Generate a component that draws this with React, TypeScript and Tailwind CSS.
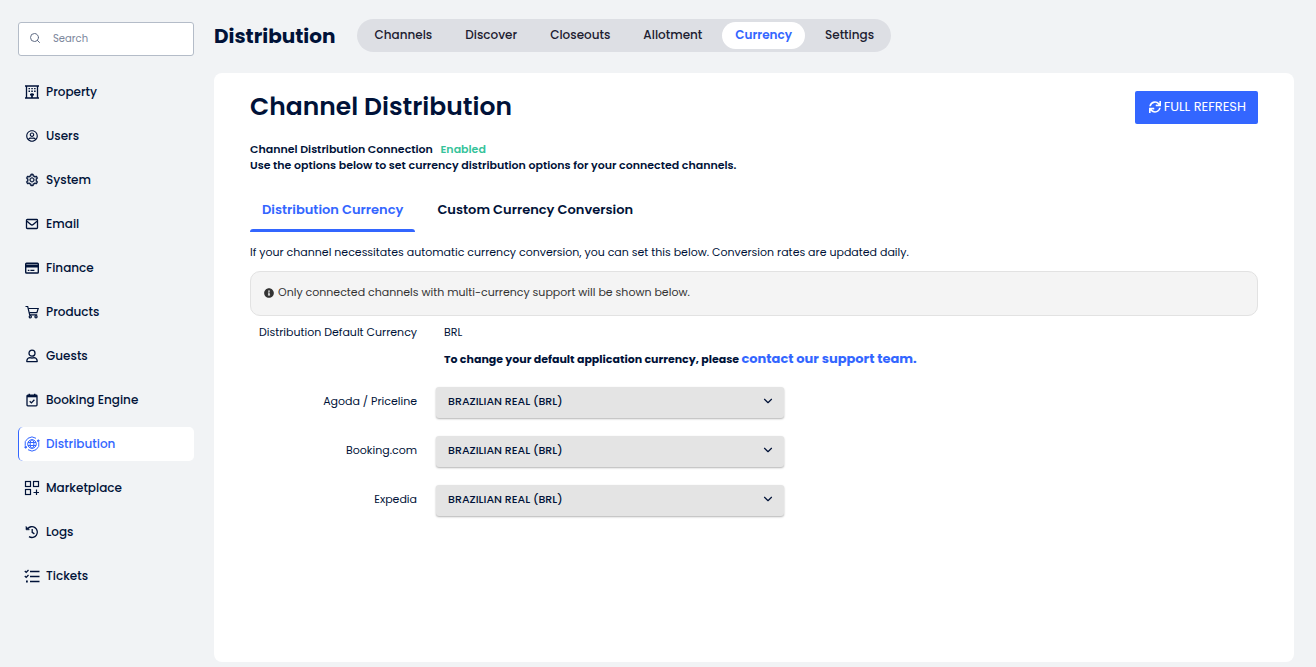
import React, { useState } from "react";
import { AiOutlineSetting } from "react-icons/ai";
import { FaInfoCircle, FaRegUserCircle, FaSync } from "react-icons/fa";
import { FiChevronDown, FiSearch } from "react-icons/fi";

type IconProps = { className?: string };

function BuildingIcon({ className }: IconProps) {
  return (
    <svg viewBox="0 0 14 14" fill="none" stroke="currentColor" className={className} aria-hidden="true">
      <path d="M0 1h14M0 13h14" strokeWidth="1.3" />
      <path d="M1.5 1v12M12.5 1v12" strokeWidth="1.3" />
      <path d="M3.5 3.6h7.2M3.5 6.3h7.2" strokeWidth="1.4" strokeDasharray="1.5 1.3" />
      <path d="M5 9.6h4M7 8.2v4.8" strokeWidth="1.7" />
    </svg>
  );
}

function MailIcon({ className }: IconProps) {
  return (
    <svg viewBox="0 0 14 14" fill="none" stroke="currentColor" strokeWidth="1.3" className={className} aria-hidden="true">
      <rect x="1.5" y="2.5" width="11" height="9" rx="0.8" />
      <path d="M2 4.2l3.8 3.3c.7.6 1.700.6 2.400 0L12 4.200" />
    </svg>
  );
}

function CardIcon({ className }: IconProps) {
  return (
    <svg viewBox="0 0 14 14" fill="none" stroke="currentColor" className={className} aria-hidden="true">
      <rect x="0.7" y="2.2" width="12.6" height="9.8" rx="0.8" strokeWidth="1.4" />
      <path d="M1 5h12" strokeWidth="3" />
      <path d="M2.8 9.4h1.6M5.4 9.4h4" strokeWidth="1.4" />
    </svg>
  );
}

function CartIcon({ className }: IconProps) {
  return (
    <svg viewBox="0 0 14 14" fill="none" stroke="currentColor" strokeWidth="1.2" className={className} aria-hidden="true">
      <path d="M.5 1.5h2.200l2 8.300h7.500" />
      <path d="M3.200 3.500h10l-1.300 4.200H4.300" />
      <circle cx="5.300" cy="11.800" r="1.100" />
      <circle cx="11" cy="11.800" r="1.100" />
    </svg>
  );
}

function GuestIcon({ className }: IconProps) {
  return (
    <svg viewBox="0 0 14 14" fill="none" stroke="currentColor" strokeWidth="1.3" className={className} aria-hidden="true">
      <circle cx="7" cy="4.2" r="3" />
      <path d="M4.8 8.6C3 8.9 1.8 10.2 1.8 12.6h10.4C12.2 10.2 11 8.9 9.2 8.6c-1.400.5-3 .5-4.400 0z" strokeLinejoin="round" />
    </svg>
  );
}

function CalendarCheckIcon({ className }: IconProps) {
  return (
    <svg viewBox="0 0 14 14" fill="none" stroke="currentColor" className={className} aria-hidden="true">
      <rect x="2" y="2.2" width="10" height="10.6" rx="0.8" strokeWidth="1.3" />
      <path d="M2 3.2h10" strokeWidth="2.2" />
      <path d="M4.3.8v2M9.7.8v2" strokeWidth="1.5" />
      <path d="M4.7 8.2l1.7 1.7 3-3.2" strokeWidth="1.3" />
    </svg>
  );
}

function GlobeOrbitIcon({ className }: IconProps) {
  return (
    <svg viewBox="0 0 16 16" fill="none" stroke="currentColor" strokeWidth="1" className={className} aria-hidden="true">
      <circle cx="8" cy="8" r="4.3" />
      <ellipse cx="8" cy="8" rx="1.9" ry="4.3" />
      <path d="M4 6.5h8M4 9.5h8" />
      <path d="M1.2 9.8A7 7 0 0 1 12 2.3" />
      <path d="M14.8 6.2A7 7 0 0 1 4 13.7" />
      <circle cx="14.3" cy="4.8" r="0.9" fill="currentColor" />
      <circle cx="1.7" cy="11.2" r="0.9" fill="currentColor" />
    </svg>
  );
}

function MarketplaceIcon({ className }: IconProps) {
  return (
    <svg viewBox="0 0 16 16" fill="none" stroke="currentColor" strokeWidth="1.2" className={className} aria-hidden="true">
      <rect x="1.5" y="1.5" width="5" height="5" />
      <rect x="9.5" y="1.5" width="5" height="5" />
      <rect x="1.5" y="9.5" width="5" height="5" />
      <path d="M12.5 9.5v5.5M9.500 12.500h5.500" />
    </svg>
  );
}

function HistoryIcon({ className }: IconProps) {
  return (
    <svg viewBox="0 0 14 14" fill="none" stroke="currentColor" strokeWidth="1.3" className={className} aria-hidden="true">
      <path d="M2.5 4A5.4 5.4 0 1 1 4 11.6" />
      <path d="M1 1.4v3.4h3.4z" fill="currentColor" strokeWidth="0.6" />
      <path d="M7.2 4v3.4l2.2 1.5" />
    </svg>
  );
}

function ChecklistIcon({ className }: IconProps) {
  return (
    <svg viewBox="0 0 16 16" fill="none" stroke="currentColor" strokeWidth="1.3" className={className} aria-hidden="true">
      <path d="M6 3.5h9.5M6 8.5h9.5M6 13.5h9.5" />
      <path d="M.8 3l1.4 1.4L4.5 2M.8 8l1.400 1.400L4.500 7" />
      <path d="M2 13.5h1.8" strokeWidth="1.8" />
    </svg>
  );
}

const navItems = [
  { label: "Property", icon: BuildingIcon, size: "h-[14px] w-[14px]" },
  { label: "Users", icon: FaRegUserCircle, size: "h-3 w-3" },
  { label: "System", icon: AiOutlineSetting, size: "h-[14px] w-[14px] stroke-[28]" },
  { label: "Email", icon: MailIcon, size: "h-[14px] w-[14px]" },
  { label: "Finance", icon: CardIcon, size: "h-[14px] w-[14px]" },
  { label: "Products", icon: CartIcon, size: "h-[14px] w-[14px]" },
  { label: "Guests", icon: GuestIcon, size: "h-[14px] w-[14px]" },
  { label: "Booking Engine", icon: CalendarCheckIcon, size: "h-[14px] w-[14px]" },
  { label: "Distribution", icon: GlobeOrbitIcon, size: "h-4 w-4" },
  { label: "Marketplace", icon: MarketplaceIcon, size: "h-4 w-4" },
  { label: "Logs", icon: HistoryIcon, size: "h-[14px] w-[14px]" },
  { label: "Tickets", icon: ChecklistIcon, size: "h-4 w-4" },
];

const sections = ["Channels", "Discover", "Closeouts", "Allotment", "Currency", "Settings"];

const tabs = ["Distribution Currency", "Custom Currency Conversion"];

const channels = ["Agoda / Priceline", "Booking.com", "Expedia"];

function Sidebar() {
  return (
    <aside className="w-[176px] shrink-0 pt-[22px]">
      <label className="flex h-[34px] items-center gap-3 rounded-[3px] border border-[#b4bcc8] bg-white px-[10px] pb-[2px]">
        <FiSearch className="h-3 w-3 shrink-0 text-[#5f6b84]" />
        <input
          type="search"
          aria-label="Search"
          placeholder="Search"
          className="w-full min-w-0 bg-transparent text-[10px] outline-none placeholder:text-[#7c879c]"
        />
      </label>

      <nav className="mt-[19px] flex flex-col gap-[10px]">
        {navItems.map(({ label, icon: Icon, size }) => {
          const active = label === "Distribution";
          return (
            <a
              key={label}
              href="#"
              aria-current={active ? "page" : undefined}
              className={`flex h-[34px] items-center gap-[6px] rounded-[5px] border-l pl-[5px] text-[12px] font-medium ${
                active ? "border-[#3366ff] bg-white text-[#3366ff]" : "border-transparent"
              }`}
            >
              <span className="flex w-4 justify-center">
                <Icon className={size} />
              </span>
              {label}
            </a>
          );
        })}
      </nav>
    </aside>
  );
}

export default function App() {
  const [tab, setTab] = useState(tabs[0]);

  return (
    <div className="flex min-h-screen gap-5 bg-[#f1f3f5] pr-[22px] pl-[18px] font-['Poppins','Inter',sans-serif] text-[#001238]">
      <Sidebar />

      <div className="flex min-w-0 flex-1 flex-col pb-[5px]">
        <header className="flex items-center gap-[22px] pt-[19px] pb-[21px]">
          <h1 className="text-[20px] leading-8 font-bold">Distribution</h1>
          <nav className="flex h-[33px] items-center gap-[7px] rounded-full bg-[#dddfe4] px-1 text-[12px] font-medium text-[#1c2030]">
            {sections.map((name) => (
              <a
                key={name}
                href="#"
                className={`flex h-[27px] items-center rounded-full px-[13px] pb-px ${
                  name === "Currency" ? "bg-white font-semibold text-[#3366ff]" : ""
                }`}
              >
                {name}
              </a>
            ))}
          </nav>
        </header>

        <main className="flex-1 rounded-lg bg-white px-9 pt-[18px] text-[11px]">
          <div className="flex items-start justify-between">
            <h2 className="text-[25px] leading-8 font-semibold">Channel Distribution</h2>
            <button
              type="button"
              className="flex h-[33px] items-center gap-[3px] rounded-[2px] bg-[#3366ff] pr-3 pb-px pl-[14px] text-[13px] text-white"
            >
              <FaSync className="h-3 w-3" />
              FULL REFRESH
            </button>
          </div>

          <div className="mt-[17px] leading-4 font-semibold">
            <p>
              Channel Distribution Connection <span className="ml-[5px] text-[#36c39a]">Enabled</span>
            </p>
            <p>Use the options below to set currency distribution options for your connected channels.</p>
          </div>

          <div role="tablist" className="mt-4 flex gap-[10px] text-[13px] font-semibold">
            {tabs.map((name) => (
              <button
                key={name}
                type="button"
                role="tab"
                aria-selected={tab === name}
                onClick={() => setTab(name)}
                className={`flex h-[43px] flex-col items-stretch justify-between pt-[11px] ${
                  tab === name ? "text-[#3366ff]" : ""
                }`}
              >
                <span className="px-3 leading-5">{name}</span>
                <span className={`h-[3px] rounded-t-[3px] ${tab === name ? "bg-[#3366ff]" : ""}`} />
              </button>
            ))}
          </div>

          <p className="mt-3 leading-4">
            If your channel necessitates automatic currency conversion, you can set this below. Conversion rates are updated daily.
          </p>

          <div className="mt-[11px] flex h-[45px] items-center gap-1 rounded-[10px] border border-[#e2e2e2] bg-[#f4f4f4] px-[13px] pb-[2px] text-[#333333]">
            <FaInfoCircle className="h-[10px] w-[10px]" />
            Only connected channels with multi-currency support will be shown below.
          </div>

          <div className="mt-2 grid grid-cols-[167px_1fr] gap-x-[27px] leading-4">
            <span className="text-right">Distribution Default Currency</span>
            <span>BRL</span>
            <p className="col-start-2 mt-[9px] leading-5 font-bold">
              To change your default application currency, please{" "}
              <a href="#" className="text-[13px] text-[#3366ff]">
                contact our support team.
              </a>
            </p>
          </div>

          <div className="mt-[18px] flex flex-col gap-[18px]">
            {channels.map((name) => (
              <label key={name} className="grid grid-cols-[167px_348px] items-center gap-x-[19px]">
                <span className="pb-[2px] text-right">{name}</span>
                <span className="relative">
                  <select className="block h-[31px] w-full appearance-none rounded-[3px] bg-[#e4e4e4] px-3 pb-[2px] text-[11px] font-medium shadow-[0_1px_2px_rgba(0,0,0,0.3)]">
                    <option>BRAZILIAN REAL (BRL)</option>
                  </select>
                  <FiChevronDown className="pointer-events-none absolute top-[7px] right-[9px] h-[14px] w-[14px]" />
                </span>
              </label>
            ))}
          </div>
        </main>
      </div>
    </div>
  );
}
